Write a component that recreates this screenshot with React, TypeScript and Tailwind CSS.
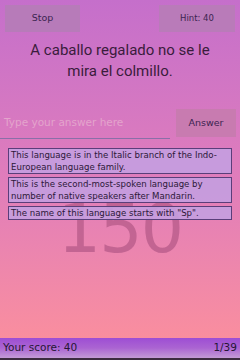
import React from "react";

const comic = { fontFamily: '"DejaVu Sans", "Noto Sans", sans-serif' };

const hints = [
  "This language is in the Italic branch of the Indo-European language family.",
  "This is the second-most-spoken language by number of native speakers after Mandarin.",
  'The name of this language starts with "Sp".',
];

export default function App() {
  return (
    <div className="relative flex h-[360px] w-[240px] flex-col overflow-hidden bg-gradient-to-b from-[#c56fcb] via-[#e07dbb] to-[#fd909a]">
      {/* watermark */}
      <div
        className="pointer-events-none absolute left-0 right-0 top-[195px] text-center text-[68px] leading-none tracking-tight text-[#b65a88]/75"
        style={comic}
      >
        150
      </div>

      {/* top buttons */}
      <div className="relative flex justify-between px-[5px] pt-[5px]" style={comic}>
        <button className="h-[27px] w-[75px] bg-[#b77bb9] text-[9.5px] text-[#3b2450]">
          Stop
        </button>
        <button className="h-[27px] w-[76px] bg-[#b97bb9] text-[8.5px] text-[#3b2450]">
          Hint: 40
        </button>
      </div>

      {/* phrase */}
      <p
        className="relative mt-[8px] px-4 text-center text-[15px] leading-[21px] text-[#3a1c3c]"
        style={{ fontFamily: 'Roboto, "Liberation Sans", sans-serif' }}
      >
        A caballo regalado no se le mira el colmillo.
      </p>

      {/* answer row */}
      <div className="relative mt-[27px] flex items-start pr-[4px]" style={comic}>
        <div className="mt-[6px] w-[170px] border-b-[1.5px] border-[#8a6fa8] pb-[7px] pl-[4px] text-[10.5px] text-[#e4a4cc]">
          Type your answer here
        </div>
        <button className="ml-auto h-[28px] w-[60px] bg-[#c87bb0] text-[9.5px] text-[#3b2450]">
          Answer
        </button>
      </div>

      {/* hints */}
      <div className="relative mt-[9px] flex flex-col gap-[3px] px-[8px]" style={comic}>
        {hints.map((h) => (
          <div
            key={h}
            className="border border-[#5a3e7a] bg-[#c49ee0]/90 px-[2px] text-[8.6px] leading-[12px] text-[#2c1838]"
          >
            {h}
          </div>
        ))}
      </div>

      {/* bottom bar */}
      <div className="relative mt-auto flex h-[22px] flex-col">
        <div
          className="flex flex-1 items-center justify-between bg-gradient-to-b from-[#9d4dd4] via-[#ab64d2] to-[#c39ad6] px-[3px] text-[10.5px] text-[#261634]"
          style={comic}
        >
          <span>Your score: 40</span>
          <span>1/39</span>
        </div>
        <div className="h-[2px] bg-[#3c2c40]" />
      </div>
    </div>
  );
}
